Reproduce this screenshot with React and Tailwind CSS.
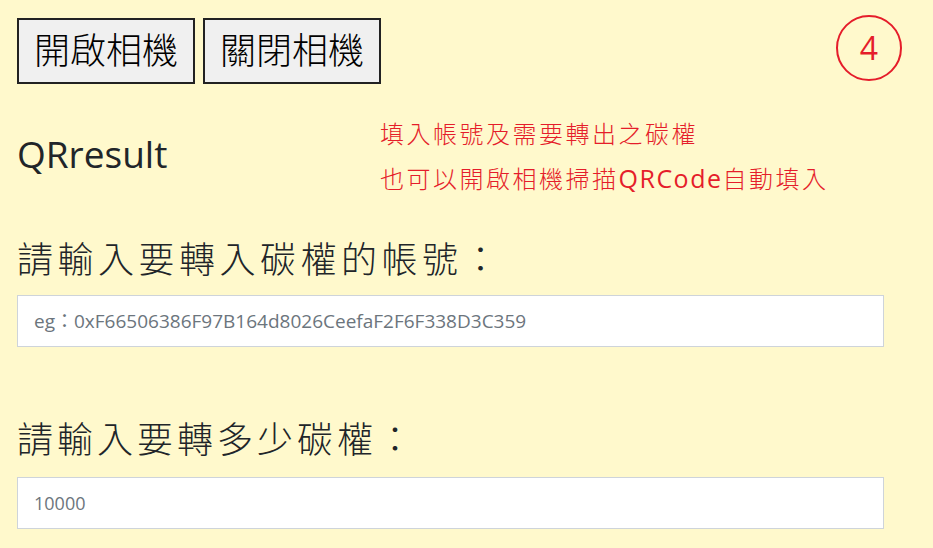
import React from 'react';

const font = { fontFamily: '"Open Sans", "Noto Sans CJK TC", sans-serif' };

export default function App() {
    return (
        <div className="w-[933px] h-[548px] overflow-hidden bg-[#fff9cc] text-[#212529] pl-[17px] pt-[18px] font-light" style={font}>
            <div className="flex items-start">
                <button className="h-[66px] px-[15px] bg-[#f0f0f0] border-2 border-[#222] text-[36px] leading-none text-black font-light">開啟相機</button>
                <button className="ml-2 h-[66px] px-[15px] bg-[#f0f0f0] border-2 border-[#222] text-[36px] leading-none text-black font-light">關閉相機</button>
                <div className="ml-auto mr-[31px] -mt-[3px] w-[66px] h-[66px] rounded-full border-2 border-[#e51d2a] flex items-center justify-center text-[#e51d2a] text-[32px] leading-none font-normal">4</div>
            </div>

            <div className="flex items-start mt-[27px]">
                <div className="w-[363px] pt-[19px] text-[37px] leading-[48px] font-normal">QRresult</div>
                <div className="text-[#e51d2a] text-[24px] leading-[45px] tracking-[2.5px]">
                    <div>填入帳號及需要轉出之碳權</div>
                    <div>也可以開啟相機掃描<span className="font-normal text-[25px] tracking-[1.5px]">QRCode</span>自動填入</div>
                </div>
            </div>

            <div className="mt-[35px] w-[867px]">
                <div className="text-[36px] leading-[48px] tracking-[4.5px]">請輸入要轉入碳權的帳號：</div>
                <input
                    className="mt-[11px] block w-full h-[52px] bg-white border border-[#ced4da] px-4 text-[19px] font-normal placeholder:text-[#6c757d] outline-none"
                    placeholder="eg：0xF66506386F97B164d8026CeefaF2F6F338D3C359"
                />
                <div className="mt-[69px] text-[36px] leading-[48px] tracking-[4px]">請輸入要轉多少碳權：</div>
                <input
                    className="mt-[13px] block w-full h-[52px] bg-white border border-[#ced4da] px-4 text-[18px] font-normal placeholder:text-[#6c757d] outline-none"
                    placeholder="10000"
                />
            </div>
        </div>
    );
}
